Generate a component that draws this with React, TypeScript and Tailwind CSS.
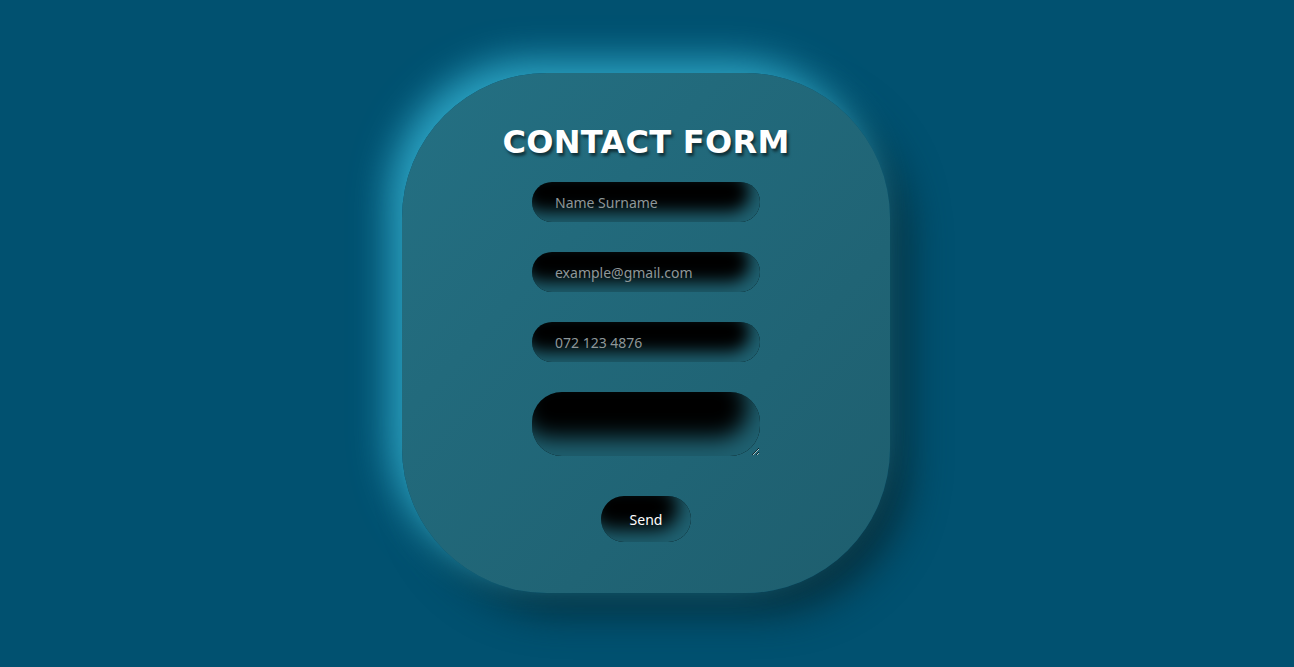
export default function App() {
  const field =
    "w-[228px] h-10 rounded-[20px] bg-black px-[23px] text-[14px] text-gray-200 placeholder:text-[#8e9799] outline-none shadow-[inset_-10px_-10px_16px_#1f6171]";
  return (
    <div className="min-h-[667px] w-full bg-[#015170] flex justify-center pt-[73px] font-['Noto_Sans',sans-serif]">
      <form
        className="w-[488px] h-[520px] mr-[2px] rounded-[145px] bg-gradient-to-br from-[#247083] to-[#1e5e6e] shadow-[-14px_-14px_36px_#2aa2c2,16px_18px_40px_#072c38] flex flex-col items-center pt-[50px]"
        onSubmit={(e) => e.preventDefault()}
      >
        <h1 className="font-['DejaVu_Sans',sans-serif] font-bold text-[32px] leading-[38px] text-white tracking-[0.3px] [text-shadow:2px_3px_3px_rgba(0,0,0,0.55)]">
          CONTACT FORM
        </h1>
        <div className="flex flex-col items-center gap-[30px] mt-[21px]">
          <input className={field} placeholder="Name Surname" />
          <input className={field} placeholder="example@gmail.com" />
          <input className={field} placeholder="072 123 4876" />
          <textarea className="w-[228px] h-16 rounded-[30px] bg-black outline-none px-[23px] py-3 text-[14px] text-gray-200 shadow-[inset_-12px_-18px_22px_#1f6171]" />
        </div>
        <button
          type="submit"
          className="mt-10 w-[90px] h-[46px] rounded-[23px] bg-black text-white text-[14px] shadow-[inset_-12px_-12px_18px_#1f6171]"
        >
          Send
        </button>
      </form>
    </div>
  );
}
